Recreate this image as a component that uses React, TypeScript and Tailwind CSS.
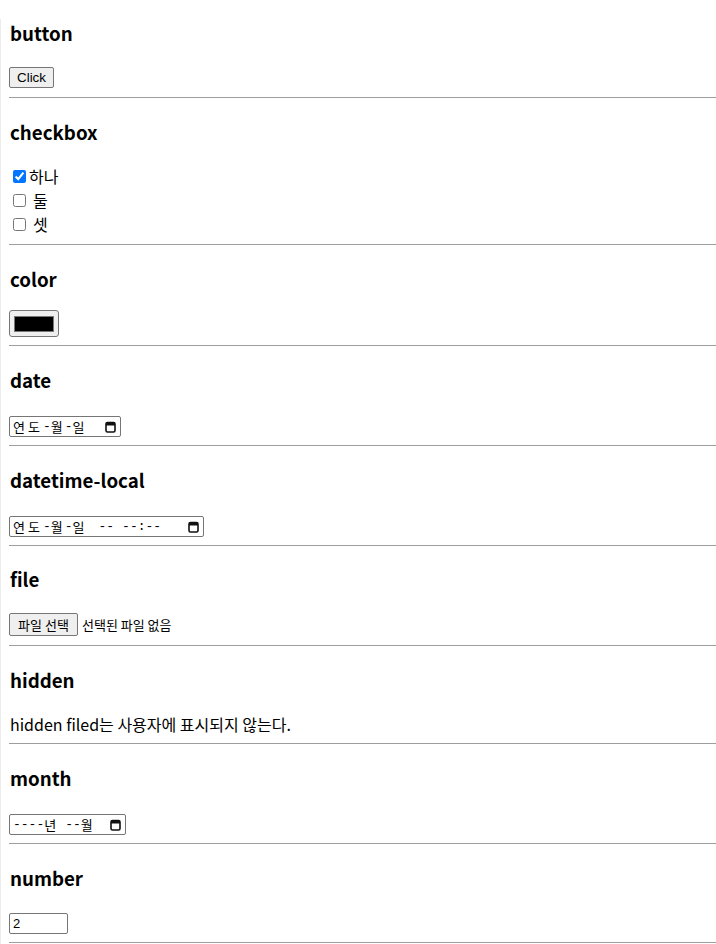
import type { ReactNode } from "react";

function CalendarIcon() {
  return (
    <svg width="11" height="12" viewBox="0 0 11 12" className="shrink-0">
      <rect x="1" y="1.5" width="9" height="9.5" rx="1.5" fill="none" stroke="#111" strokeWidth="1.6" />
      <rect x="1" y="1.5" width="9" height="3" fill="#111" />
    </svg>
  );
}

interface SectionProps {
  title: string;
  top?: string;
  gap: string;
  bottom: string;
  children: ReactNode;
}

function Section({ title, top = "mt-[20px]", gap, bottom, children }: SectionProps) {
  return (
    <section>
      <h3 className={`${top} h-[28px] pl-[1px] text-[18.72px] leading-[28px] font-bold`}>{title}</h3>
      <div className={`flex ${gap} ${bottom}`}>{children}</div>
      <hr className="h-px border-0 bg-[#9e9e9e]" />
    </section>
  );
}

const fieldBox =
  "flex h-[21px] items-center rounded-[2px] border border-[#767676] bg-white text-[13px] text-black";

const dash = "font-['Liberation_Mono',monospace] text-[13px]";

function DateText() {
  return (
    <span className="flex items-center">
      <span className="tracking-[3px]">연도</span>
      <span className={dash}>-</span>
      <span className="tracking-[2px]">월</span>
      <span className={dash}>-</span>
      <span>일</span>
    </span>
  );
}

export default function App() {
  return (
    <div className="min-h-[944px] border-l border-[#ececec] bg-white pl-2 font-['Noto_Sans_CJK_KR',sans-serif] text-black">
      <Section title="button" top="mt-[19px]" gap="mt-[20px]" bottom="mb-[9px]">
        <button
          type="button"
          className="h-[21px] w-[45px] rounded-[2px] border border-[#767676] bg-[#efefef] font-['Liberation_Sans',Arial,sans-serif] text-[13.33px] leading-[19px]"
        >
          Click
        </button>
      </Section>

      <Section title="checkbox" gap="mt-[18px]" bottom="mb-[8px]">
        <div className="flex flex-col text-[16px] leading-[24px]">
          <label className="flex h-[24px] items-center">
            <input type="checkbox" defaultChecked className="mt-0 mr-[3px] mb-0 ml-[4px] h-[13px] w-[13px]" />
            <span>하나</span>
          </label>
          <label className="flex h-[24px] items-center">
            <input type="checkbox" className="mt-0 mr-[3px] mb-0 ml-[4px] h-[13px] w-[13px]" />
            <span className="pl-[4px]">둘</span>
          </label>
          <label className="flex h-[24px] items-center">
            <input type="checkbox" className="mt-0 mr-[3px] mb-0 ml-[4px] h-[13px] w-[13px]" />
            <span className="pl-[4px]">셋</span>
          </label>
        </div>
      </Section>

      <Section title="color" gap="mt-[17px]" bottom="mb-[8px]">
        <div className="flex h-[27px] w-[50px] items-center justify-center rounded-[3px] border border-[#767676] bg-[#efefef]">
          <div className="h-[16px] w-[40px] border border-[#777] bg-black" />
        </div>
      </Section>

      <Section title="date" gap="mt-[22px]" bottom="mb-[8px]">
        <div className={`${fieldBox} w-[112px] justify-between pr-[4px] pl-[3px]`}>
          <DateText />
          <CalendarIcon />
        </div>
      </Section>

      <Section title="datetime-local" gap="mt-[22px]" bottom="mb-[8px]">
        <div className={`${fieldBox} w-[195px] pr-[4px] pl-[3px]`}>
          <DateText />
          <span className={`ml-[14px] ${dash}`}>--</span>
          <span className={`ml-[8px] flex-1 ${dash}`}>--:--</span>
          <CalendarIcon />
        </div>
      </Section>

      <Section title="file" top="mt-[19px]" gap="mt-[20px]" bottom="mb-[9px]">
        <div className="flex items-center text-[13px]">
          <button
            type="button"
            className="h-[23px] w-[69px] rounded-[2px] border border-[#767676] bg-[#efefef] leading-[21px]"
          >
            파일 선택
          </button>
          <span className="ml-[4px]">선택된 파일 없음</span>
        </div>
      </Section>

      <Section title="hidden" gap="mt-[18px]" bottom="mb-[7px]">
        <p className="pl-[1px] text-[16px] leading-[24px]">hidden filed는 사용자에 표시되지 않는다.</p>
      </Section>

      <Section title="month" gap="mt-[22px]" bottom="mb-[8px]">
        <div className={`${fieldBox} w-[117px] pr-[4px] pl-[3px]`}>
          <span className={dash}>----</span>
          <span>년</span>
          <span className={`ml-[9px] ${dash}`}>--</span>
          <span className="flex-1">월</span>
          <CalendarIcon />
        </div>
      </Section>

      <Section title="number" gap="mt-[21px]" bottom="mb-[8px]">
        <div className={`${fieldBox} w-[59px] pl-[3px] font-['Liberation_Sans',Arial,sans-serif] text-[13.33px]`}>
          2
        </div>
      </Section>
    </div>
  );
}
